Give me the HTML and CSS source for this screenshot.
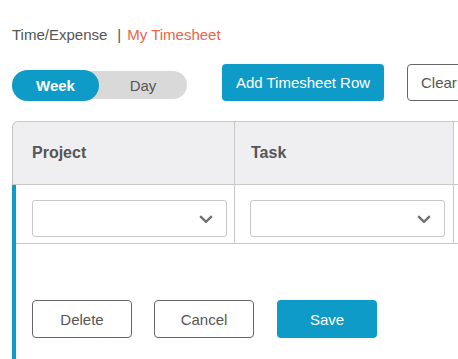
FILE: index.html
```html
<!DOCTYPE html>
<html>
<head>
  <meta charset="UTF-8">
  <meta name="viewport" content="width=device-width, initial-scale=1.0">
  <title>My Timesheet</title>
  <link rel="stylesheet" href="styles.css">
</head>
<body>
  <div class="page">
    <div class="crumbs">
      <span>Time/Expense</span><span class="sep">|</span><span class="current">My Timesheet</span>
    </div>

    <div class="toolbar">
      <div class="toggle">
        <button class="toggle-opt on">Week</button>
        <button class="toggle-opt">Day</button>
      </div>
      <button class="btn primary add">Add Timesheet Row</button>
      <button class="btn outline clear">Clear</button>
    </div>

    <div class="sheet">
      <div class="sheet-head">
        <div class="cell">Project</div>
        <div class="cell">Task</div>
        <div class="cell"></div>
      </div>
      <div class="sheet-body">
        <div class="sheet-row">
          <div class="cell">
            <div class="select">
              <svg width="14" height="8" viewBox="0 0 14 8"><path d="M1.2 1.2l5.8 5.6 5.8-5.6" fill="none" stroke="#707070" stroke-width="2.4"/></svg>
            </div>
          </div>
          <div class="cell">
            <div class="select">
              <svg width="14" height="8" viewBox="0 0 14 8"><path d="M1.2 1.2l5.8 5.6 5.8-5.6" fill="none" stroke="#707070" stroke-width="2.4"/></svg>
            </div>
          </div>
          <div class="cell"></div>
        </div>
        <!-- row buttons -->
        <div class="actions">
          <button class="btn outline">Delete</button>
          <button class="btn outline">Cancel</button>
          <button class="btn primary save">Save</button>
        </div>
      </div>
    </div>
  </div>
</body>
</html>
```

FILE: styles.css
```css
* {
  box-sizing: border-box;
}
body {
  margin: 0;
  background: #fff;
  color: #555;
  font-family: "Liberation Sans", Arial, sans-serif;
  overflow: hidden;
}

.page {
  width: 800px;
  padding: 25px 0 0 12px;
}

.crumbs {
  font-size: 15px;
  line-height: 20px;
}
.sep {
  margin: 0 6px 0 10px;
}
.current {
  color: #e8654a;
}

button {
  font-family: inherit;
  font-size: 15px;
  border: 0;
  padding: 0;
  background: none;
  color: inherit;
  cursor: pointer;
}

.toolbar {
  display: flex;
  align-items: flex-end;
  margin-top: 19px;
}

.toggle {
  display: flex;
  align-items: center;
  flex-shrink: 0;
  width: 175px;
  height: 28px;
  margin-bottom: 2px;
  background: #d9d9d9;
  border-radius: 14px;
}
.toggle-opt {
  flex: 1;
  height: 28px;
  color: #555;
}
.toggle-opt.on {
  flex: 0 0 87px;
  height: 31px;
  border-radius: 16px;
  background: #0f9bc8;
  color: #fff;
  font-weight: bold;
}

.btn {
  flex-shrink: 0;
  white-space: nowrap;
  border-radius: 4px;
}
.primary {
  background: #0f9bc8;
  color: #fff;
}
.outline {
  background: #fff;
  border: 1px solid #666;
  color: #555;
}

.add {
  width: 162px;
  height: 37px;
  margin-left: 35px;
}
.clear {
  height: 37px;
  margin-left: 23px;
  padding: 0 13px;
}

.sheet {
  margin-top: 20px;
}

.sheet-head {
  display: grid;
  grid-template-columns: 222px 219px 1fr;
  height: 64px;
  border: 1px solid #c8c8c8;
  border-right: 0;
  border-top-left-radius: 6px;
  background: #efeff1;
}
.sheet-head .cell {
  display: flex;
  align-items: center;
  padding-left: 16px;
  border-right: 1px solid #c8c8c8;
  font-size: 16px;
  font-weight: bold;
}
.sheet-head .cell:first-child {
  padding-left: 19px;
}
.sheet-head .cell:last-child {
  background: #fff;
  border-right: 0;
}

.sheet-body {
  border-left: 4px solid #0f9bc8;
}

.sheet-row {
  display: grid;
  grid-template-columns: 219px 219px 1fr;
  border-bottom: 1px solid #c8c8c8;
}
.sheet-row .cell {
  padding: 15px 0 6px 15px;
  border-right: 1px solid #c8c8c8;
}
.sheet-row .cell:first-child {
  padding-left: 16px;
}
.sheet-row .cell:last-child {
  border-right: 0;
}

.select {
  display: flex;
  align-items: center;
  justify-content: flex-end;
  width: 195px;
  height: 37px;
  padding-right: 13px;
  border: 1px solid #c8c8c8;
  border-radius: 3px;
  background: #fff;
}

.actions {
  display: flex;
  gap: 22px;
  padding: 56px 0 21px 16px;
}
.actions .btn {
  width: 100px;
  height: 38px;
}
.save {
  margin-left: 1px;
}
```
